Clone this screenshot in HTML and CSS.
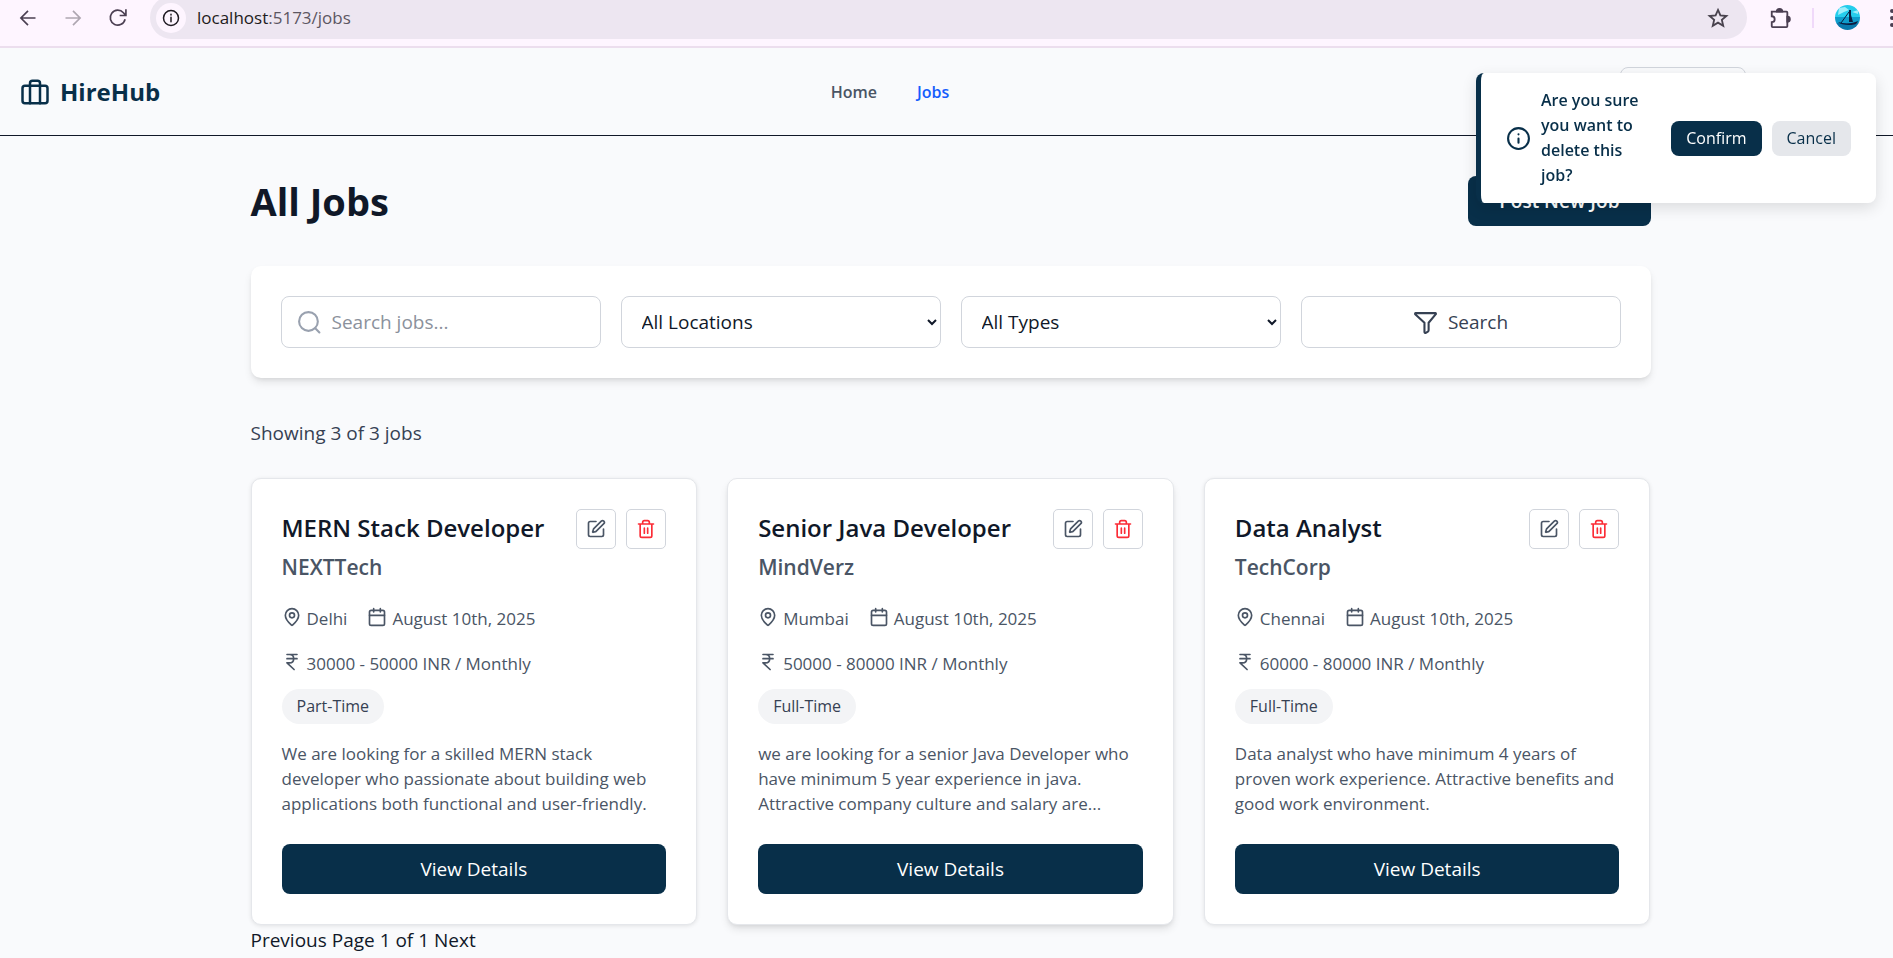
FILE: index.html
```html
<!DOCTYPE html>
<html lang="en">
<head>
<meta charset="utf-8">
<title>HireHub - Jobs</title>
<link rel="stylesheet" href="styles.css">
</head>
<body>
<svg class="sprite" aria-hidden="true">
  <symbol id="pin" viewBox="0 0 24 24"><path d="M20 10c0 4.993-5.539 10.193-7.399 11.799a1 1 0 0 1-1.202 0C9.539 20.193 4 14.993 4 10a8 8 0 0 1 16 0"/><circle cx="12" cy="10" r="3"/></symbol>
  <symbol id="calendar" viewBox="0 0 24 24"><path d="M8 2v4M16 2v4"/><rect width="18" height="18" x="3" y="4" rx="2"/><path d="M3 10h18"/></symbol>
  <symbol id="rupee" viewBox="0 0 24 24"><path d="M6 3h12M6 8h12M6 13l8.500 8M6 13h3M9 13c6.667 0 6.667-10 0-10"/></symbol>
  <symbol id="edit" viewBox="0 0 24 24"><path d="M12 3H5a2 2 0 0 0-2 2v14a2 2 0 0 0 2 2h14a2 2 0 0 0 2-2v-7"/><path d="M18.375 2.625a1 1 0 0 1 3 3l-9.013 9.014a2 2 0 0 1-.853.505l-2.873.84a.5.5 0 0 1-.62-.62l.84-2.873a2 2 0 0 1 .506-.852z"/></symbol>
  <symbol id="trash" viewBox="0 0 24 24"><path d="M3 6h18M19 6v14c0 1-1 2-2 2H7c-1 0-2-1-2-2V6M8 6V4c0-1 1-2 2-2h4c1 0 2 1 2 2v2M10 11v6M14 11v6"/></symbol>
  <symbol id="info" viewBox="0 0 24 24"><circle cx="12" cy="12" r="10"/><path d="M12 16v-4M12 8h.01"/></symbol>
</svg>

<div class="toolbar">
  <button class="tool" aria-label="Back"><svg viewBox="0 0 24 24"><path d="M21 12H4M12 3.500 3.500 12l8.500 8.500"/></svg></button>
  <button class="tool tool-off" aria-label="Forward"><svg viewBox="0 0 24 24"><path d="M3 12h17M12 3.500l8.500 8.500-8.500 8.500"/></svg></button>
  <button class="tool" aria-label="Reload"><svg viewBox="0 0 24 24"><path d="M20.500 13.500A9 9 0 1 1 18.500 5.700L21 8.500M21.500 1.500v7.500h-7.500"/></svg></button>
  <div class="address">
    <span class="site-info"><svg viewBox="0 0 24 24"><circle cx="12" cy="12" r="10"/><path d="M12 17v-6M12 7v1"/></svg></span>
    <span class="url">localhost<span class="url-path">:5173/jobs</span></span>
    <button class="star" aria-label="Bookmark"><svg viewBox="0 0 24 24"><path d="M12 3.200l2.600 6 6.600.6-5 4.300 1.500 6.400L12 17.100l-5.700 3.400 1.500-6.400-5-4.300 6.600-.6z"/></svg></button>
  </div>
  <button class="tool puzzle" aria-label="Extensions"><svg viewBox="0 0 24 24"><path d="M3 5h16a1 1 0 0 1 1 1v15a1 1 0 0 1-1 1H4a1 1 0 0 1-1-1v-4.500a3.200 3.200 0 0 0 0-6.400z"/><path class="solid" d="M8.500 5a3 3 0 0 1 6 0zM20 10.500a2.600 2.600 0 0 1 0 5.500z"/></svg></button>
  <span class="divider"></span>
  <svg class="avatar" viewBox="0 0 25 25" role="img" aria-label="Profile">
    <defs><clipPath id="round"><circle cx="12.500" cy="12.500" r="12.500"/></clipPath></defs>
    <g clip-path="url(#round)"><path fill="#25cdec" d="M0 0h25v13H0z"/><path fill="#9ceefa" d="M4 3l6-1 4 3-5 2-6 3zM17 7l6-2v4z"/><path fill="#0e9ccb" d="M0 12h25v6H0z"/><path fill="#0878ac" d="M0 18h25v7H0z"/><path fill="#0b1e42" d="M3 17c6 2 14 2 20-1-1 3-3 4-9 4-5 0-9-1-11-3zM14 5h2v5l2 7h-4z"/><path stroke="#0b1e42" stroke-width="1" d="M14 7 6 18"/></g>
  </svg>
  <span class="kebab"><i></i><i></i><i></i></span>
</div>

<header class="header">
  <a class="brand" href="#"><svg viewBox="0 0 24 24"><rect x="2" y="7" width="20" height="14" rx="2"/><path d="M16 21V5a2 2 0 0 0-2-2h-4a2 2 0 0 0-2 2v16"/></svg>HireHub</a>
  <nav class="nav"><a href="#">Home</a><a class="active" href="#">Jobs</a></nav>
  <div class="account"><button class="account-btn" aria-label="Account"></button></div>
</header>

<main class="main">
  <div class="title-row"><h1>All Jobs</h1><button class="primary post">Post New Job</button></div>

  <form class="filters">
    <label class="field search-field"><svg viewBox="0 0 24 24"><circle cx="11" cy="11" r="9"/><path d="m21.500 21.500-4-4"/></svg><input type="text" placeholder="Search jobs..." aria-label="Search jobs"></label>
    <select class="field" aria-label="Location"><option>All Locations</option></select>
    <select class="field" aria-label="Type"><option>All Types</option></select>
    <button class="field search-btn" type="button"><svg viewBox="0 0 24 24"><path d="M2.500 3h19a.6.600 0 0 1 .4 1L15 12.200V19.500a1.500 1.500 0 0 1-.7 1.200l-2 1.200a.9.900 0 0 1-1.300-.8V12.200L2.100 4a.6.600 0 0 1 .4-1z"/></svg>Search</button>
  </form>

  <p class="count">Showing 3 of 3 jobs</p>

  <section class="jobs">
    <article class="card">
      <div class="card-head"><h2>MERN Stack Developer</h2><div class="actions"><button aria-label="Edit"><svg><use href="#edit"/></svg></button><button class="danger" aria-label="Delete"><svg><use href="#trash"/></svg></button></div></div>
      <p class="company">NEXTTech</p>
      <div class="meta"><span><svg><use href="#pin"/></svg>Delhi</span><span><svg><use href="#calendar"/></svg>August 10th, 2025</span></div>
      <div class="meta"><span><svg><use href="#rupee"/></svg>30000 - 50000 INR / Monthly</span></div>
      <span class="pill">Part-Time</span>
      <p class="desc">We are looking for a skilled MERN stack developer who passionate about building web applications both functional and user-friendly.</p>
      <button class="primary">View Details</button>
    </article>
    <article class="card raised">
      <div class="card-head"><h2>Senior Java Developer</h2><div class="actions"><button aria-label="Edit"><svg><use href="#edit"/></svg></button><button class="danger" aria-label="Delete"><svg><use href="#trash"/></svg></button></div></div>
      <p class="company">MindVerz</p>
      <div class="meta"><span><svg><use href="#pin"/></svg>Mumbai</span><span><svg><use href="#calendar"/></svg>August 10th, 2025</span></div>
      <div class="meta"><span><svg><use href="#rupee"/></svg>50000 - 80000 INR / Monthly</span></div>
      <span class="pill">Full-Time</span>
      <p class="desc">we are looking for a senior Java Developer who have minimum 5 year experience in java. Attractive company culture and salary are...</p>
      <button class="primary">View Details</button>
    </article>
    <article class="card">
      <div class="card-head"><h2>Data Analyst</h2><div class="actions"><button aria-label="Edit"><svg><use href="#edit"/></svg></button><button class="danger" aria-label="Delete"><svg><use href="#trash"/></svg></button></div></div>
      <p class="company">TechCorp</p>
      <div class="meta"><span><svg><use href="#pin"/></svg>Chennai</span><span><svg><use href="#calendar"/></svg>August 10th, 2025</span></div>
      <div class="meta"><span><svg><use href="#rupee"/></svg>60000 - 80000 INR / Monthly</span></div>
      <span class="pill">Full-Time</span>
      <p class="desc">Data analyst who have minimum 4 years of proven work experience. Attractive benefits and good work environment.</p>
      <button class="primary">View Details</button>
    </article>
  </section>
  <p class="pager">Previous Page 1 of 1 Next</p>
</main>

<div class="toast" role="alertdialog" aria-label="Confirm delete">
  <svg><use href="#info"/></svg>
  <p>Are you sure you want to delete this job?</p>
  <button class="confirm">Confirm</button>
  <button class="cancel">Cancel</button>
</div>
</body>
</html>
```

FILE: styles.css
```css
* { box-sizing: border-box; }
body {
  margin: 0;
  min-height: 100vh;
  overflow: hidden;
  background: #f9fafc;
  color: #101828;
  font: 400 19px/30px "Segoe UI", "Open Sans", "Noto Sans", sans-serif;
}
h1, h2, p { margin: 0; }
button, input, select { font: inherit; color: inherit; margin: 0; }
button { border: 0; padding: 0; background: none; cursor: pointer; }
a { color: inherit; text-decoration: none; }
svg { fill: none; stroke: currentColor; stroke-width: 2; stroke-linecap: round; stroke-linejoin: round; flex: none; }
.sprite { position: absolute; width: 0; height: 0; }

/* browser toolbar */
.toolbar {
  display: flex;
  height: 48px;
  padding: 0 0 11px 18px;
  align-items: center;
  overflow: hidden;
  background: #fef5ff;
  border-bottom: 2px solid #ecdeee;
  color: #4b3f52;
}
.tool { display: flex; width: 20px; margin-right: 25px; }
.tool svg { width: 20px; height: 20px; stroke-width: 2; stroke-linecap: butt; stroke-linejoin: miter; }
.tool-off { color: #aea6b1; }
.address {
  flex: 1;
  display: flex;
  align-items: center;
  height: 43px;
  margin-left: -3px;
  padding: 0 18px 0 6px;
  border-radius: 22px;
  background: #ede6f1;
}
.site-info { display: flex; padding: 6px; border-radius: 50%; background: #fef5ff; color: #1f1a22; }
.site-info svg { width: 18px; height: 18px; stroke-width: 2; }
.url { flex: 1; margin-left: 11px; font-size: 17px; color: #1d1b20; }
.url-path { color: #5c5662; }
.star { display: flex; color: #49434e; }
.star svg { width: 22px; height: 22px; stroke-linejoin: miter; }
.puzzle { margin: 0 21px 0 22px; width: 22px; }
.puzzle svg { width: 22px; height: 22px; stroke-width: 2; }
.solid { fill: currentColor; }
.divider { width: 2px; height: 20px; background: #f0d9fa; }
.avatar { width: 25px; height: 25px; margin: 0 30px 0 21px; stroke: none; }
.kebab { display: grid; gap: 3px; width: 3px; }
.kebab i { width: 4px; height: 4px; border-radius: 50%; background: currentColor; }

/* site header */
.header {
  display: flex;
  justify-content: space-between;
  align-items: center;
  height: 88px;
  padding: 0 11px 0 20px;
  border-bottom: 1px solid #101828;
}
.brand { display: flex; align-items: center; gap: 10px; font-size: 24px; font-weight: 700; color: #082f49; }
.brand svg { width: 30px; height: 30px; }
.nav { display: flex; gap: 40px; font-size: 16px; font-weight: 600; color: #4a5565; }
.active { color: #155dfc; }
.account { display: flex; width: 262px; }
.account-btn { width: 126px; height: 50px; border: 1px solid #d1d5dc; border-radius: 8px; }

.main { max-width: 1408px; margin: 0 auto; padding: 40px 0 0 8px; }
.title-row { display: flex; justify-content: space-between; align-items: center; }
h1 { font-size: 38px; line-height: 50px; font-weight: 700; }
.primary { height: 50px; border-radius: 8px; background: #082f49; color: #fff; font-weight: 500; }
.post { padding: 0 31px; font-weight: 600; }

.filters {
  display: grid;
  grid-template-columns: repeat(4, 1fr);
  gap: 20px;
  margin: 40px 0;
  padding: 30px;
  border-radius: 10px;
  background: #fff;
  box-shadow: 0 5px 8px -1px #0000001a, 0 2px 5px -2px #0000001a;
}
.field { width: 100%; height: 52px; border: 1px solid #d1d5dc; border-radius: 8px; background: #fff; }
select.field { padding: 0 0 0 16px; }
.search-field { display: flex; align-items: center; gap: 10px; padding: 0 15px; color: #99a1af; }
.search-field svg, .search-btn svg { width: 25px; height: 25px; }
.search-field input { min-width: 0; flex: 1; border: 0; padding: 0; outline: 0; background: none; color: #101828; }
.search-field input::placeholder { color: #8b919c; }
.search-btn { display: flex; align-items: center; justify-content: center; gap: 10px; color: #364153; }
.count { margin-bottom: 30px; color: #364153; }

.jobs { display: grid; grid-template-columns: repeat(3, 1fr); gap: 30px; }
.card {
  display: flex;
  flex-direction: column;
  align-items: flex-start;
  padding: 30px;
  border: 1px solid #e5e7eb;
  border-radius: 10px;
  background: #fff;
  box-shadow: 0 1px 4px #0000001a;
}
.raised { box-shadow: 0 5px 8px -1px #0000001a, 0 2px 5px -2px #0000001a; }
.card-head { display: flex; justify-content: space-between; width: 100%; }
h2 { font-size: 24px; line-height: 38px; font-weight: 600; }
.actions { display: flex; gap: 10px; color: #4a5565; }
.actions button { display: grid; place-items: center; width: 40px; height: 40px; border: 1px solid #d1d5dc; border-radius: 5px; }
.actions svg { width: 20px; height: 20px; }
.actions .danger { color: #fb2c36; }
.company { margin-bottom: 21px; font-size: 21px; line-height: 36px; font-weight: 600; color: #4a5565; }
.meta { display: flex; gap: 20px; margin-bottom: 20px; font-size: 17px; line-height: 25px; color: #4a5565; }
.meta span { display: flex; gap: 5px; }
.meta svg { width: 20px; height: 20px; margin-top: 1px; }
.pill { margin: -7px 0 17px; padding: 5px 15px; border-radius: 18px; background: #f3f4f6; font-size: 16px; line-height: 25px; color: #364153; }
.desc { margin-bottom: 28px; font-size: 17px; line-height: 25px; color: #4a5565; }
.card .primary { width: 100%; }

.toast {
  position: fixed;
  top: 73px;
  right: 17px;
  display: flex;
  align-items: center;
  width: 400px;
  padding: 15px 25px;
  border-left: 5px solid #082f49;
  border-radius: 8px;
  background: #fff;
  color: #082f49;
  font-size: 16px;
  box-shadow: 0 5px 15px #0000001f;
}
.toast svg { width: 25px; height: 25px; }
.toast p { flex: 1; margin: 0 20px 0 10px; line-height: 25px; font-weight: 600; }
.toast button { height: 35px; padding: 0 15px; border-radius: 8px; }
.confirm { background: #082f49; color: #fff; }
.cancel { margin-left: 10px; background: #e5e7eb; }
```
